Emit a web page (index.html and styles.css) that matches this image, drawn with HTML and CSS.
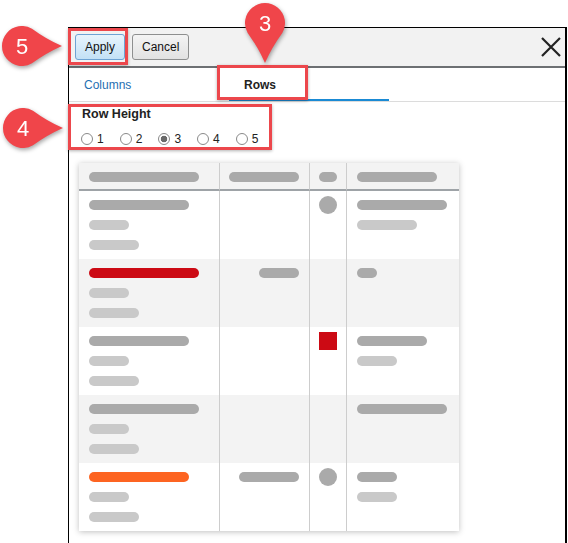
FILE: index.html
```html
<!DOCTYPE html>
<html lang="en">
<head>
    <meta charset="UTF-8">
    <meta name="viewport" content="width=device-width, initial-scale=1.0">
    <title>Grid settings - Rows</title>
    <link rel="stylesheet" href="styles.css">
</head>
<body>
    <div class="dialog">
        <div class="dialog-head">
            <button class="btn btn-apply">Apply</button>
            <button class="btn">Cancel</button>
            <button class="close" aria-label="Close">
                <svg width="20" height="20" viewBox="0 0 20 20"><path d="M1 1L19 19M19 1L1 19" stroke="#222" stroke-width="2.2" fill="none"/></svg>
            </button>
        </div>

        <div class="tabs">
            <div class="tab">Columns</div>
            <div class="tab active">Rows</div>
        </div>

        <div class="row-height">
            <div class="rh-title">Row Height</div>
            <div class="rh-options">
                <label class="rh-opt"><input type="radio" name="rh">1</label>
                <label class="rh-opt"><input type="radio" name="rh">2</label>
                <label class="rh-opt"><input type="radio" name="rh" checked>3</label>
                <label class="rh-opt"><input type="radio" name="rh">4</label>
                <label class="rh-opt"><input type="radio" name="rh">5</label>
            </div>
        </div>

        <div class="preview">
            <!-- header -->
            <div class="c c1 hd"><span class="bar w110"></span></div>
            <div class="c c2 hd"><span class="bar w70"></span></div>
            <div class="c c3 hd"><span class="bar w18"></span></div>
            <div class="c c4 hd"><span class="bar w80"></span></div>
            <!-- row 1 -->
            <div class="c c1"><span class="bar w100"></span><span class="bar light w40"></span><span class="bar light w50"></span></div>
            <div class="c c2"></div>
            <div class="c c3"><span class="dot round"></span></div>
            <div class="c c4"><span class="bar w90"></span><span class="bar light w60"></span></div>
            <!-- row 2 -->
            <div class="c c1 alt"><span class="bar red w110"></span><span class="bar light w40"></span><span class="bar light w50"></span></div>
            <div class="c c2 alt"><span class="bar w40"></span></div>
            <div class="c c3 alt"></div>
            <div class="c c4 alt"><span class="bar w20"></span></div>
            <!-- row 3 -->
            <div class="c c1"><span class="bar w100"></span><span class="bar light w40"></span><span class="bar light w50"></span></div>
            <div class="c c2"></div>
            <div class="c c3"><span class="dot square"></span></div>
            <div class="c c4"><span class="bar w70"></span><span class="bar light w40"></span></div>
            <!-- row 4 -->
            <div class="c c1 alt"><span class="bar w110"></span><span class="bar light w40"></span><span class="bar light w50"></span></div>
            <div class="c c2 alt"></div>
            <div class="c c3 alt"></div>
            <div class="c c4 alt"><span class="bar w90"></span></div>
            <!-- row 5 -->
            <div class="c c1"><span class="bar orange w100"></span><span class="bar light w40"></span><span class="bar light w50"></span></div>
            <div class="c c2"><span class="bar w60"></span></div>
            <div class="c c3"><span class="dot round"></span></div>
            <div class="c c4"><span class="bar w40"></span><span class="bar light w40"></span></div>
        </div>
    </div>

    <!-- annotation marks -->
    <div class="mark mark-apply"></div>
    <div class="mark mark-rows"></div>
    <div class="mark mark-height"></div>

    <svg class="pin pin-5" width="64" height="44" viewBox="0 0 64 44">
        <path d="M62 22Q46 15 32 4.68A20 20 0 1 0 32 39.32Q46 29 62 22Z"/>
        <text x="22" y="30">5</text>
    </svg>
    <svg class="pin pin-4" width="64" height="44" viewBox="0 0 64 44">
        <path d="M62 22Q46 15 32 4.68A20 20 0 1 0 32 39.32Q46 29 62 22Z"/>
        <text x="22" y="30">4</text>
    </svg>
    <svg class="pin pin-3" width="44" height="64" viewBox="0 0 44 64">
        <path d="M22 62Q15 46 4.68 32A20 20 0 1 1 39.32 32Q29 46 22 62Z"/>
        <text x="22" y="30">3</text>
    </svg>
</body>
</html>
```

FILE: styles.css
```css
html, body {
    overflow: hidden;
}
body {
    margin: 0;
    position: relative;
    height: 543px;
    background: #fff;
    font-family: 'Liberation Sans', Arial, sans-serif;
    font-size: 12px;
    color: #222;
}
.dialog {
    margin: 27px 0 0 68px;
    width: 499px;
    height: 540px;
    box-sizing: border-box;
    border: 1px solid #000;
    border-right-width: 2px;
    border-bottom: none;
}
.dialog-head {
    display: flex;
    align-items: center;
    gap: 7px;
    height: 38px;
    padding: 0 4px 0 6px;
    background: #f2f2f2;
    border-bottom: 2px solid #6d7073;
}
.btn {
    height: 26px;
    padding: 0 9px;
    font-family: inherit;
    font-size: 12px;
    color: #111;
    border: 1px solid #8e8f8f;
    border-radius: 3px;
    background: linear-gradient(#f4f4f4, #e2e2e2);
}
.btn-apply {
    width: 50px;
    padding: 0;
    border-color: #6ea3d4;
    background: linear-gradient(#e8f4fc, #c3e1f6);
}
.close {
    margin-left: auto;
    padding: 0;
    width: 20px;
    height: 20px;
    border: none;
    background: none;
}
.close svg {
    display: block;
}
.tabs {
    display: flex;
    height: 34px;
    box-sizing: border-box;
    border-bottom: 1px solid #dcdcdc;
}
.tab {
    width: 160px;
    height: 33px;
    box-sizing: border-box;
    padding: 2px 0 0 15px;
    line-height: 31px;
    color: #1f6fb2;
    border-bottom: 2px solid transparent;
}
.tab.active {
    font-weight: bold;
    color: #222;
    border-bottom-color: #1a8ad4;
}
.row-height {
    padding: 5px 13px 0;
}
.rh-title {
    font-weight: bold;
    font-size: 12.5px;
    line-height: 15px;
}
.rh-options {
    display: flex;
    gap: 17px;
    margin-top: 9px;
    height: 16px;
    align-items: center;
}
.rh-opt {
    display: inline-flex;
    align-items: center;
    gap: 4px;
    margin-left: -1px;
}
.rh-opt input {
    appearance: none;
    margin: 0;
    width: 12px;
    height: 12px;
    border: 1px solid #8a8a8a;
    border-radius: 50%;
    background: #fff;
}
.rh-opt input:checked {
    background: radial-gradient(circle, #6a6a6a 0 3px, #fff 3.6px);
}
.preview {
    display: grid;
    grid-template-columns: 141px 90px 37px 112px;
    grid-template-rows: 28px repeat(5, 68px);
    width: 380px;
    margin: 16px 0 0 10px;
    box-shadow: 0 1px 6px rgba(0, 0, 0, 0.25);
    background: #fff;
}
.c {
    display: flex;
    flex-direction: column;
    gap: 10px;
    padding-top: 9px;
    box-sizing: border-box;
    border-right: 1px solid #cdcdcd;
}
.c4 {
    border-right: none;
}
.c1, .c4 {
    padding-left: 10px;
    align-items: flex-start;
}
.c2 {
    padding-right: 10px;
    align-items: flex-end;
}
.c3 {
    align-items: center;
}
.hd {
    background: #f3f3f3;
    border-bottom: 2px solid #9ea3a7;
}
.alt {
    background: #f3f3f3;
}
.bar {
    display: block;
    height: 10px;
    border-radius: 5px;
    background: #aaa;
}
.bar.light { background: #c9c9c9; }
.bar.red { background: #cc0a14; }
.bar.orange { background: #fd6421; }
.w18 { width: 18px; }
.w20 { width: 20px; }
.w40 { width: 40px; }
.w50 { width: 50px; }
.w60 { width: 60px; }
.w70 { width: 70px; }
.w80 { width: 80px; }
.w90 { width: 90px; }
.w100 { width: 100px; }
.w110 { width: 110px; }
.dot {
    display: block;
    width: 18px;
    height: 18px;
    margin-top: -4px;
}
.dot.round {
    border-radius: 50%;
    background: #aaa;
}
.dot.square {
    background: #cc0a14;
}

/* annotation overlays */
.mark {
    position: absolute;
    box-sizing: border-box;
    border: 3px solid #ec474c;
    box-shadow: 0 1px 3px rgba(0, 0, 0, 0.3);
}
.mark-apply { left: 68px; top: 28px; width: 60px; height: 37px; }
.mark-rows { left: 217px; top: 65px; width: 91px; height: 35px; }
.mark-height { left: 68px; top: 104px; width: 204px; height: 46px; }
.pin {
    position: absolute;
    fill: #f0454a;
    filter: drop-shadow(1px 2px 2px rgba(0, 0, 0, 0.35));
}
.pin text {
    fill: #fff;
    font-family: 'Liberation Sans', Arial, sans-serif;
    font-size: 22px;
    text-anchor: middle;
}
.pin-5 { left: 0; top: 24px; }
.pin-4 { left: 1px; top: 106px; }
.pin-3 { left: 243px; top: 1px; }
```
